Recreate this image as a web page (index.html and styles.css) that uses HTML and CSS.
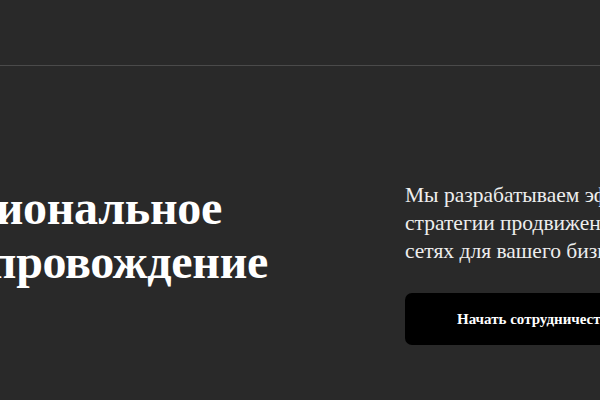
FILE: index.html
```html
<!DOCTYPE html>
<html lang="ru">
<head>
    <meta charset="UTF-8">
    <meta name="viewport" content="width=device-width, initial-scale=1.0">
    <title>SMM-сопровождение</title>
    <link rel="stylesheet" href="styles.css">
</head>
<body>
    <div class="header"></div>

    <section class="hero">
        <h1 class="hero-title">
            <span>Профессиональное</span>
            <span>SMM-сопровождение</span>
        </h1>
        <div class="hero-side">
            <p class="hero-text">Мы разрабатываем эффективные стратегии продвижения в социальных сетях для вашего бизнеса</p>
            <button class="hero-btn">Начать сотрудничество</button>
        </div>
    </section>
</body>
</html>
```

FILE: styles.css
```css
* {
    box-sizing: border-box;
    margin: 0;
    padding: 0;
}

body {
    background: #292929;
    color: #fff;
    font-family: "Liberation Serif", "DejaVu Serif", serif;
    min-height: 100vh;
    overflow: hidden;
}

.header {
    height: 66px;
    border-bottom: 1px solid #4a4a4a;
}

.hero {
    width: 955px;
    margin-left: -188px;
    padding-top: 115px;
    display: grid;
    grid-template-columns: 593px 360px;
    align-items: start;
}

.hero-title {
    font-weight: 700;
    font-size: 48px;
    line-height: 54px;
    letter-spacing: -0.3px;
}

.hero-title span {
    display: block;
}

.hero-text {
    font-size: 21.5px;
    line-height: 28px;
    color: #eeeeee;
    margin-bottom: 28px;
}

.hero-btn {
    height: 52px;
    padding: 0 52px;
    background: #000;
    color: #fff;
    border: none;
    border-radius: 7px;
    font-family: "Liberation Serif", serif;
    font-weight: 700;
    font-size: 15px;
    cursor: pointer;
}
```
